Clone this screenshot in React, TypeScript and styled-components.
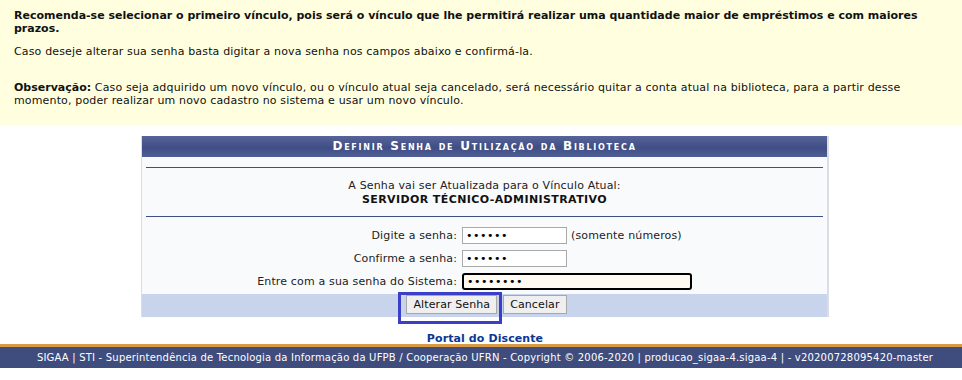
import React from 'react';
import styled, { createGlobalStyle } from 'styled-components';

const Global = createGlobalStyle`
  html, body {
    margin: 0;
    padding: 0;
    background: #fff;
    overflow: hidden;
  }
  body {
    font-family: "DejaVu Sans", Verdana, sans-serif;
    font-size: 11px;
    letter-spacing: 0.15px;
    color: #222;
  }
`;

const Page = styled.div`
  width: 970px;
`;

const Notice = styled.div`
  background: #ffffe0;
  padding: 9px 14px 18px;
`;

const Para = styled.p<{ $gap?: number; $bold?: boolean }>`
  margin: ${(p) => p.$gap ?? 0}px 0 0;
  line-height: 13px;
  font-weight: ${(p) => (p.$bold ? 'bold' : 'normal')};
  letter-spacing: ${(p) => (p.$bold ? '0' : '0.15px')};
  color: #111;
`;

const Lead = styled.b`
  letter-spacing: 0;
`;

const Panel = styled.div`
  width: 688px;
  margin: 11px auto 0;
  background: #f9fafc;
  border-left: 1px solid #dcdde2;
  border-right: 2px solid #dcdde2;
  box-sizing: border-box;
`;

const Caption = styled.div`
  height: 21px;
  background: linear-gradient(#56649a, #3f4e84 55%, #4f5e94);
  color: #fff;
  font-weight: bold;
  font-variant: small-caps;
  letter-spacing: 1.75px;
  text-align: center;
  line-height: 21px;
  font-size: 12px;
  margin-bottom: 10px;
`;

const Rule = styled.div`
  height: 1px;
  background: #3d4f84;
  margin: 0 4px;
`;

const Info = styled.div`
  text-align: center;
  padding: 11px 0 9px;
  line-height: 14px;
`;

const Strong = styled.div`
  font-weight: bold;
  letter-spacing: 0.4px;
  color: #111;
`;

const Form = styled.div`
  display: grid;
  grid-template-columns: 315px auto;
  column-gap: 5px;
  row-gap: 6px;
  align-items: center;
  padding: 10px 0 4px;
`;

const Label = styled.label`
  text-align: right;
  color: #222;
`;

const FieldCell = styled.div`
  display: flex;
  align-items: center;
  gap: 4px;
`;

const Input = styled.input<{ $w: number; $focused?: boolean }>`
  width: ${(p) => p.$w}px;
  height: 17px;
  box-sizing: border-box;
  padding: 0 3px;
  font-size: 11px;
  font-family: "DejaVu Sans", Verdana, sans-serif;
  letter-spacing: 0.5px;
  border: ${(p) => (p.$focused ? '2px solid #000' : '1px solid #a9a9a9')};
  border-radius: ${(p) => (p.$focused ? '3px' : '0')};
  background: ${(p) => (p.$focused ? '#fffaf2' : '#fff')};
  outline: none;
`;

const Hint = styled.span`
  color: #222;
`;

const Actions = styled.div`
  background: #c8d4ec;
  height: 23px;
  display: flex;
  justify-content: center;
  align-items: flex-start;
  gap: 6px;
  padding-left: 4px;
`;

const ButtonWrap = styled.div`
  position: relative;
  margin-top: 1px;
`;

const FocusRing = styled.div`
  position: absolute;
  left: -8px;
  right: -5px;
  top: -3px;
  bottom: -10px;
  border: 3px solid #3b3ec6;
  pointer-events: none;
`;

const Button = styled.button`
  height: 19px;
  padding: 0 6px;
  font-family: "DejaVu Sans", Verdana, sans-serif;
  font-size: 11px;
  letter-spacing: 0.1px;
  color: #111;
  background: #efefef;
  border: 1px solid #a8a8a8;
  border-radius: 0;
`;

const PortalLink = styled.a`
  display: block;
  text-align: center;
  font-weight: bold;
  letter-spacing: 0.1px;
  color: #0b3795;
  text-decoration: none;
  margin-top: 16px;
  line-height: 12px;
`;

const Footer = styled.div`
  margin-top: -1px;
  border-top: 3px solid #d99c46;
  background: #3f4c7e;
  color: #fff;
  text-align: center;
  font-size: 10px;
  letter-spacing: 0.2px;
  height: 21px;
  line-height: 21px;
`;

const pwd = (n: number) => '•'.repeat(n);

export default function App() {
  return (
    <Page>
      <Global />
      <Notice>
        <Para $bold>
          Recomenda-se selecionar o primeiro vínculo, pois será o vínculo que lhe permitirá realizar uma
          quantidade maior de empréstimos e com maiores prazos.
        </Para>
        <Para $gap={10}>Caso deseje alterar sua senha basta digitar a nova senha nos campos abaixo e confirmá-la.</Para>
        <Para $gap={23}>
          <Lead>Observação:</Lead> Caso seja adquirido um novo vínculo, ou o vínculo atual seja cancelado, será
          necessário quitar a conta atual na biblioteca, para a partir desse momento, poder realizar um novo
          cadastro no sistema e usar um novo vínculo.
        </Para>
      </Notice>

      <Panel>
        <Caption>Definir Senha de Utilização da Biblioteca</Caption>
        <Rule />
        <Info>
          A Senha vai ser Atualizada para o Vínculo Atual:
          <Strong>SERVIDOR TÉCNICO-ADMINISTRATIVO</Strong>
        </Info>
        <Rule />
        <Form>
          <Label>Digite a senha:</Label>
          <FieldCell>
            <Input type="text" readOnly $w={105} value={pwd(6)} />
            <Hint>(somente números)</Hint>
          </FieldCell>
          <Label>Confirme a senha:</Label>
          <FieldCell>
            <Input type="text" readOnly $w={105} value={pwd(6)} />
          </FieldCell>
          <Label>Entre com a sua senha do Sistema:</Label>
          <FieldCell>
            <Input type="text" readOnly $w={230} $focused value={pwd(8)} />
          </FieldCell>
        </Form>
        <Actions>
          <ButtonWrap>
            <Button>Alterar Senha</Button>
            <FocusRing />
          </ButtonWrap>
          <ButtonWrap>
            <Button>Cancelar</Button>
          </ButtonWrap>
        </Actions>
      </Panel>

      <PortalLink href="#">Portal do Discente</PortalLink>
      <Footer>
        SIGAA | STI - Superintendência de Tecnologia da Informação da UFPB / Cooperação UFRN - Copyright © 2006-2020 |
        producao_sigaa-4.sigaa-4 | - v20200728095420-master
      </Footer>
    </Page>
  );
}
